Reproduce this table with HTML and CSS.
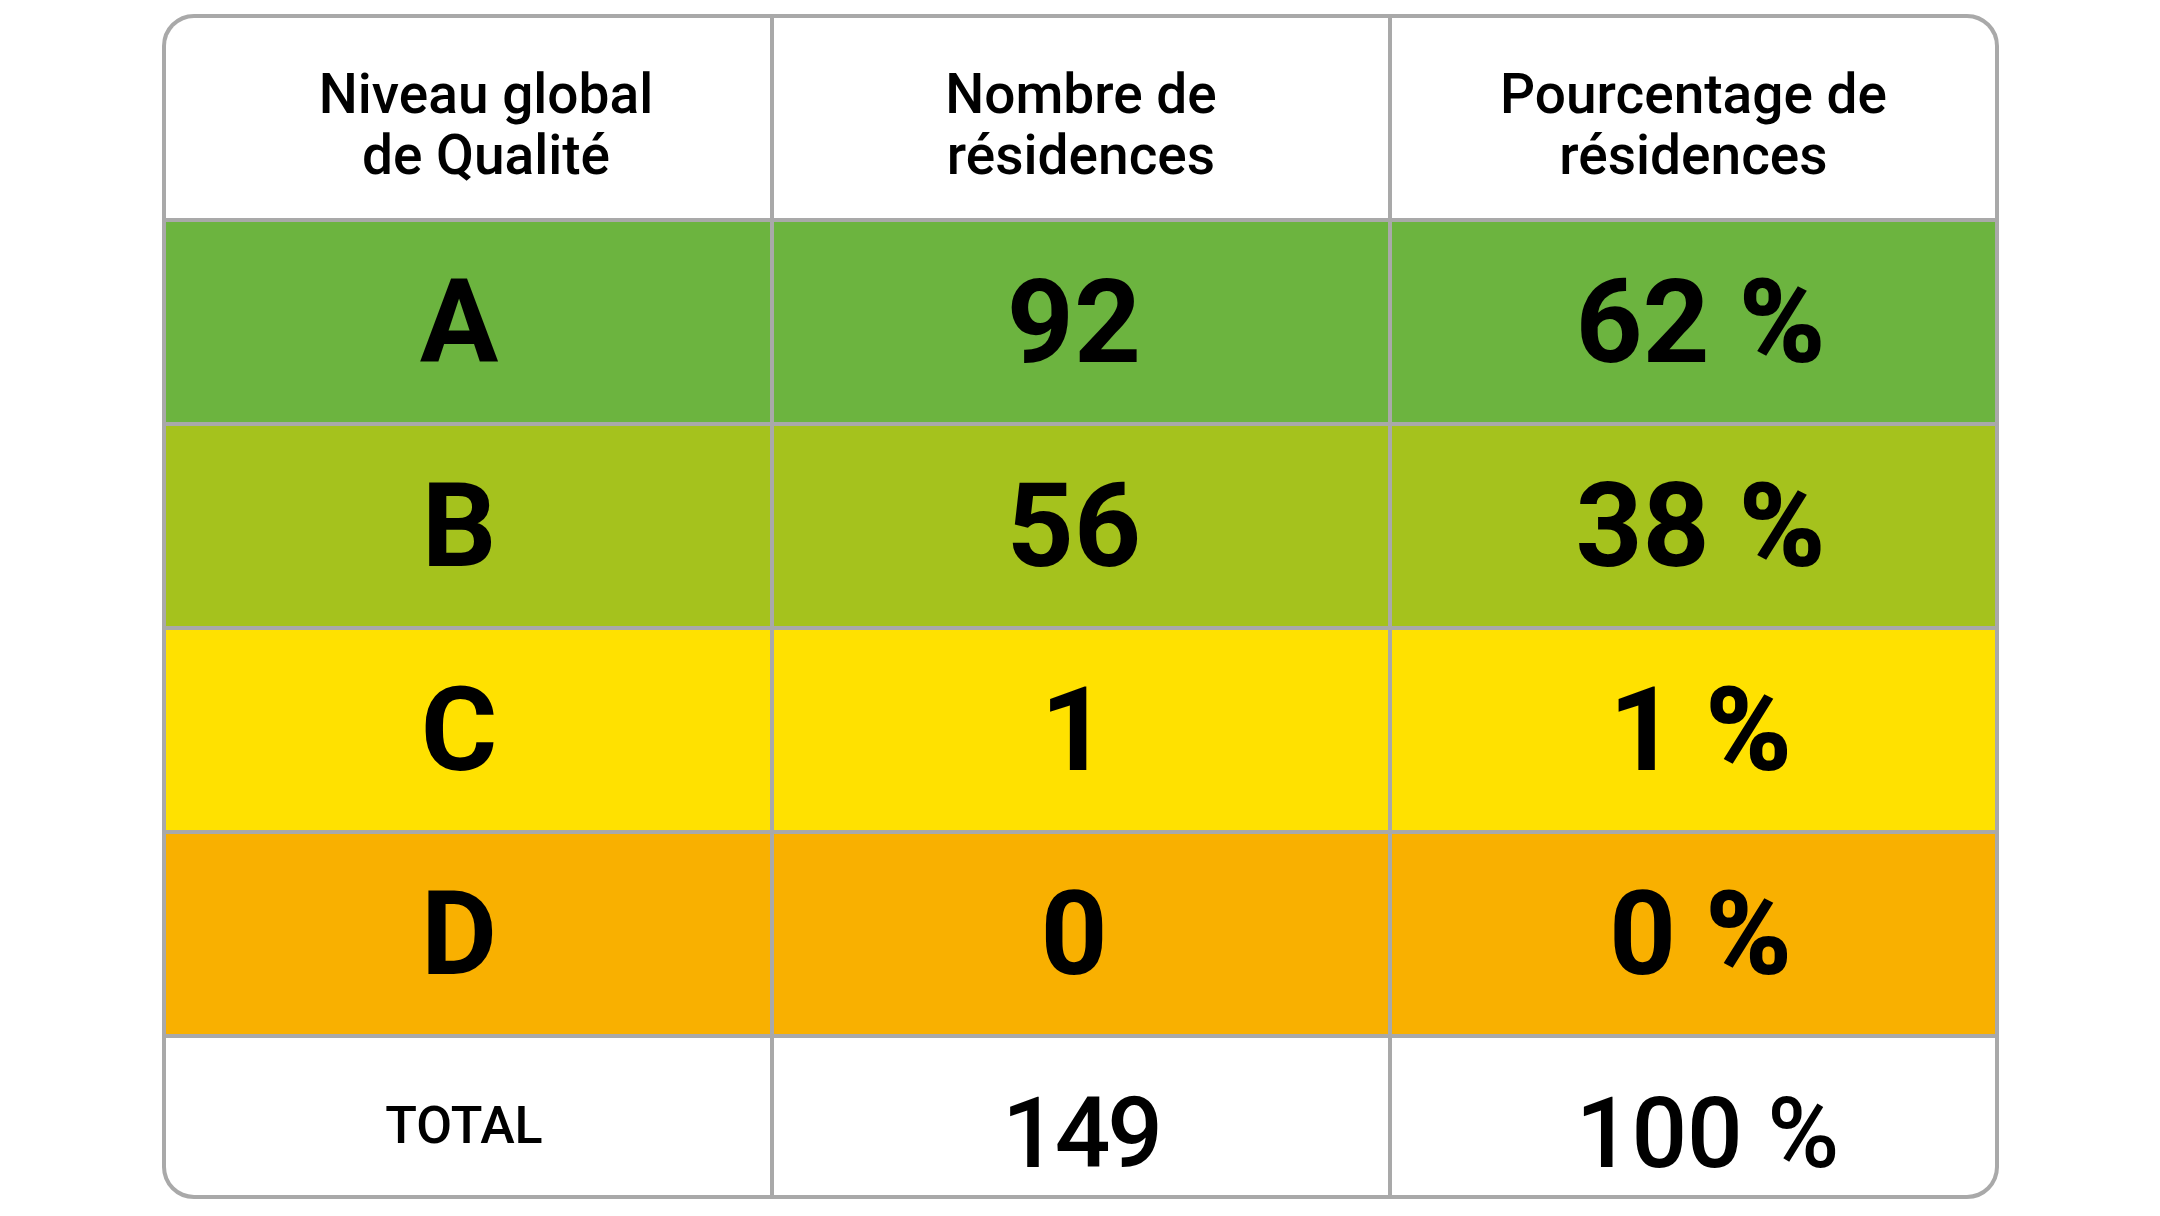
FILE: index.html
```html
<!DOCTYPE html>
<html lang="fr">
<head>
<meta charset="utf-8">
<title>Niveau global de Qualité</title>
<link rel="stylesheet" href="styles.css">
</head>
<body>
<div class="page">
  <div class="table">
    <div class="cell head c1">Niveau global<br>de Qualité</div>
    <div class="cell head c2">Nombre de<br>résidences</div>
    <div class="cell head c3">Pourcentage de<br>résidences</div>

    <div class="cell big a c1">A</div>
    <div class="cell big a c2">92</div>
    <div class="cell big a c3">62&nbsp;<span class="pc">%</span></div>

    <div class="cell big b c1">B</div>
    <div class="cell big b c2">56</div>
    <div class="cell big b c3">38&nbsp;<span class="pc">%</span></div>

    <div class="cell big c c1">C</div>
    <div class="cell big c c2">1</div>
    <div class="cell big c c3">1&nbsp;<span class="pc">%</span></div>

    <div class="cell big d c1">D</div>
    <div class="cell big d c2">0</div>
    <div class="cell big d c3">0&nbsp;<span class="pc">%</span></div>

    <div class="cell total-label c1">TOTAL</div>
    <div class="cell total-num c2">149</div>
    <div class="cell total-num c3">100&nbsp;%</div>
  </div>
</div>
</body>
</html>
```

FILE: styles.css
```css
html, body {
  margin: 0;
  padding: 0;
  background: #ffffff;
}

.page {
  padding: 14px 0 0 162px;
}

.table {
  display: grid;
  grid-template-columns: 604px 614px 603px;
  grid-template-rows: 200px 200px 200px 200px 200px 157px;
  gap: 4px;
  width: max-content;
  background: #a9a9a9;
  border: 4px solid #a9a9a9;
  border-radius: 32px;
  overflow: hidden;
  font-family: "Roboto", "Liberation Sans", sans-serif;
  color: #000;
}

.cell {
  display: flex;
  align-items: center;
  justify-content: center;
  text-align: center;
  background: #fff;
}

.head {
  font-size: 55px;
  font-weight: 500;
  line-height: 61px;
  padding-top: 14px;
}

.head.c1 {
  padding-left: 36px;
}

.big {
  font-size: 117px;
  font-weight: 700;
  line-height: 1;
}

.pc {
  font-weight: 900;
}

.big.c1 {
  padding-right: 18px;
}

.big.c2 {
  padding-right: 14px;
}

.big.c3 {
  padding-left: 14px;
}

.a { background: #6cb43f; }
.b { background: #a5c21d; }
.c { background: #ffe100; }
.d { background: #f9b000; }

.total-label {
  font-size: 52px;
  font-weight: 500;
  padding-top: 18px;
  padding-right: 8px;
}

.total-num {
  font-size: 98px;
  font-weight: 500;
  line-height: 1;
  padding-top: 34px;
}

.total-num.c2 {
  letter-spacing: -3px;
}

.total-num.c3 {
  padding-left: 28px;
}
```
